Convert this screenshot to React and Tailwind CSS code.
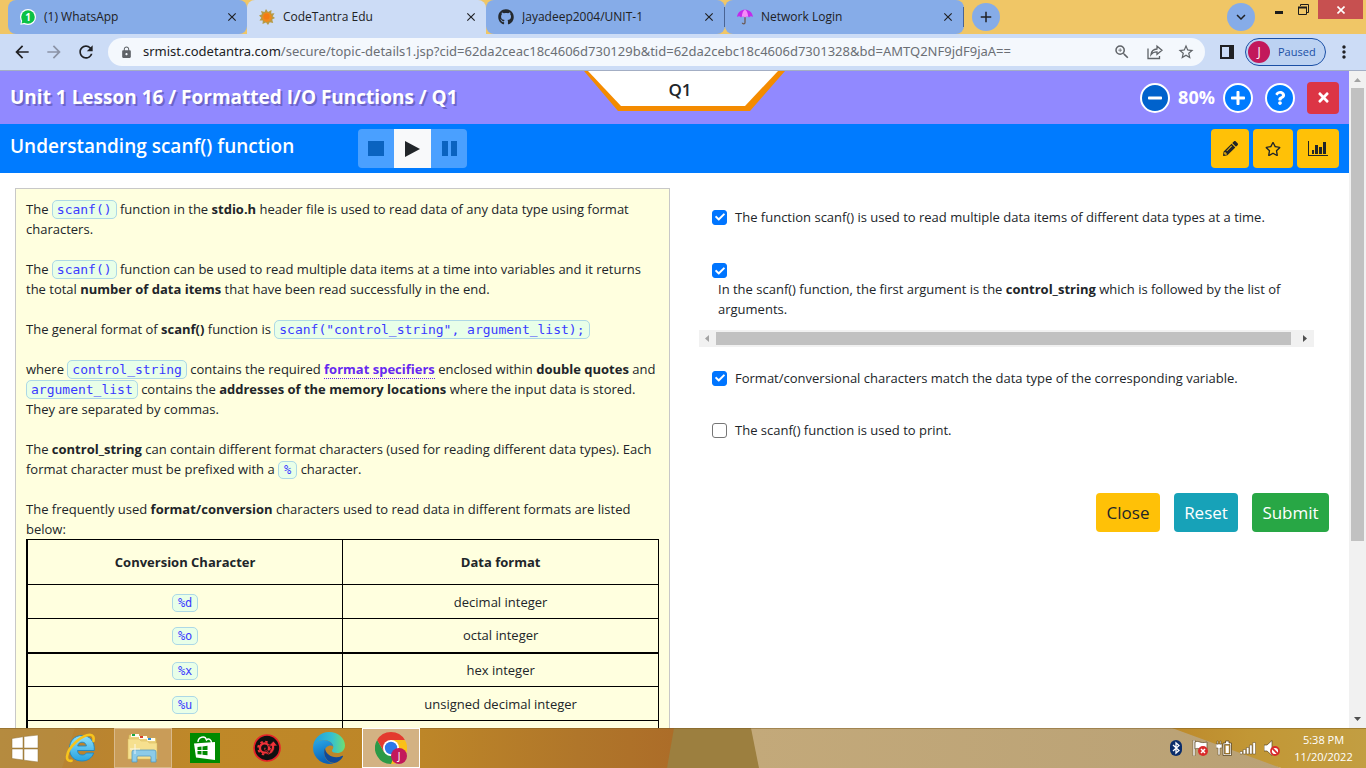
import React from "react";
import {
  MdArrowBack,
  MdArrowForward,
  MdRefresh,
  MdLock,
  MdStarBorder,
  MdZoomIn,
  MdClose,
  MdAdd,
  MdKeyboardArrowDown,
  MdMoreVert,
} from "react-icons/md";
import {
  FaGithub,
  FaMinus,
  FaPlus,
  FaQuestion,
  FaTimes,
  FaPencilAlt,
  FaRegStar,
  FaCheck,
} from "react-icons/fa";

/* ---------- Browser icons ---------- */

function WhatsAppIcon() {
  return (
    <svg viewBox="0 0 16 16" className="h-4 w-4 shrink-0">
      <circle cx="8" cy="8" r="8" fill="#fff" />
      <path d="M0.3 15.8 1.4 11l4 4z" fill="#fff" />
      <circle cx="8" cy="8" r="6.8" fill="#0bc144" />
      <path d="M1.6 14.5 2.5 10.5l3 3z" fill="#0bc144" />
      <text x="8" y="11.8" textAnchor="middle" fontFamily="Open Sans" fontWeight="700" fontSize="10" fill="#fff">
        1
      </text>
    </svg>
  );
}

function SunIcon() {
  return (
    <svg viewBox="0 0 16 16" className="h-4 w-4 shrink-0">
      <path
        d="M7 0l2 3 3.5-2-.3 3.400 3.300-.2-1.800 3L16 9l-2.800 1.500 1 3.500-3.400-.8L9 16l-2-2.600L3.500 15l.3-3.400L.5 11.500l1.800-2.800L0 6.500l3-1.200L2 2l3.500 1z"
        fill="#b79a45"
      />
      <circle cx="8" cy="8.200" r="4.700" fill="#f08a1c" />
      <circle cx="7.500" cy="7.500" r="3" fill="#f47b12" />
    </svg>
  );
}

function UmbrellaIcon() {
  return (
    <svg viewBox="0 0 16 16" className="h-4 w-4 shrink-0">
      <path d="M8 7v6.500c0 1.800-2.600 1.800-2.600.2" fill="none" stroke="#6b5a55" strokeWidth="1.300" />
      <path d="M0 8C.8 3.200 4 .8 8 .8S15.200 3.200 16 8c-1.400-1-3-.9-4 .4-1.200-1.600-2.600-1.600-4 0-1.300-1.600-2.700-1.600-4 0C3 7.100 1.400 7 0 8z" fill="#c22bea" />
      <path d="M4.800 8C5 4 6.400 1.500 8 .8c1.600.7 3 3.200 3.200 7.200-1-.8-2.200-.6-3.200.4-1-1-2.200-1.200-3.200-.4z" fill="#f58bf7" />
    </svg>
  );
}

function ShareIcon() {
  return (
    <svg viewBox="0 0 16 16" className="h-4 w-4" fill="none" stroke="#5f6368" strokeWidth="1.300">
      <path d="M1 4.500v10h11.500V12" />
      <path d="M4 10.500c.5-3.600 2.600-5.300 6-5.500V2.200L15 6.300l-5 4V7.800c-2.600 0-4.500.7-6 2.700z" />
    </svg>
  );
}

function Tab({ icon, title, active, divider }) {
  return (
    <div
      className={
        "flex w-[239px] items-center pl-3 pr-2 " +
        (active ? "rounded-t-lg bg-[#ccdcf6]" : "rounded-lg bg-[#86ace8]")
      }
    >
      {icon}
      <span className="ml-2 flex-1 truncate text-[12px] text-[#202124]">{title}</span>
      <button aria-label={"Close " + title} className="text-[#202124]">
        <MdClose size={14} />
      </button>
      {divider && <span className="-mr-2 ml-2 h-5 w-px bg-[#4a6494]" />}
    </div>
  );
}

function BrowserChrome() {
  return (
    <div className="shrink-0">
      <div className="flex h-[34px] bg-[#f0c666]">
        <div className="flex pl-2">
          <Tab icon={<WhatsAppIcon />} title="(1) WhatsApp" />
          <Tab icon={<SunIcon />} title="CodeTantra Edu" active />
          <Tab icon={<FaGithub size={16} className="shrink-0 text-[#24292f]" />} title="Jayadeep2004/UNIT-1" divider />
          <Tab icon={<UmbrellaIcon />} title="Network Login" divider />
        </div>
        <button aria-label="New tab" className="ml-2 mt-[3px] grid h-7 w-7 place-items-center rounded-full bg-[#86ace8] text-[#202124]">
          <MdAdd size={18} />
        </button>
        <div className="flex-1" />
        <button aria-label="Search tabs" className="mt-[3px] grid h-7 w-7 place-items-center rounded-full bg-[#86ace8] text-[#202124]">
          <MdKeyboardArrowDown size={18} />
        </button>
        <button aria-label="Minimize" className="ml-3 grid h-6 w-6 place-items-center">
          <span className="h-[3px] w-2 bg-[#1c1c1c]" />
        </button>
        <button aria-label="Restore" className="grid h-[18px] w-6 place-items-center">
          <svg viewBox="0 0 11 11" className="h-[11px] w-[11px]" fill="none" stroke="#1c1c1c">
            <path d="M2.500 2V.5h8v8H9" />
            <path d="M.5 3v7.500h8V3" />
            <path d="M0 3.500h9" strokeWidth="2" />
          </svg>
        </button>
        <button aria-label="Close window" className="ml-[3px] mr-[3px] grid h-[19px] w-[45px] place-items-center bg-[#c75050] text-white">
          <svg viewBox="0 0 8 8" className="h-2 w-2" stroke="#fff" strokeWidth="1.600">
            <path d="M.5.5l7 7M7.500.5l-7 7" />
          </svg>
        </button>
      </div>

      <div className="flex h-[37px] items-center border-b border-[#a3aec4] bg-[#ccdcf6] pl-3 pr-3">
        <button aria-label="Back" className="text-[#202124]">
          <MdArrowBack size={20} />
        </button>
        <button aria-label="Forward" className="ml-3 text-[#8b93a6]">
          <MdArrowForward size={20} />
        </button>
        <button aria-label="Reload" className="ml-3 text-[#202124]">
          <MdRefresh size={20} />
        </button>
        <div className="ml-3 flex h-7 flex-1 items-center rounded-full bg-[#f4f8fd] pl-3 pr-2.5">
          <MdLock size={13} className="shrink-0 text-[#5f6368]" />
          <p className="ml-2.5 flex-1 whitespace-nowrap font-['Noto_Sans',sans-serif] text-[13px] text-[#6b6f75]">
            <span className="text-[#202124]">srmist.codetantra.com</span>
            /secure/topic-details1.jsp?cid=62da2ceac18c4606d730129b&amp;tid=62da2cebc18c4606d7301328&amp;bd=AMTQ2NF9jdF9jaA==
          </p>
          <button aria-label="Zoom" className="text-[#5f6368]">
            <MdZoomIn size={18} />
          </button>
          <button aria-label="Share" className="ml-4">
            <ShareIcon />
          </button>
          <button aria-label="Bookmark" className="ml-3.5 text-[#5f6368]">
            <MdStarBorder size={18} />
          </button>
        </div>
        <button aria-label="Side panel" className="ml-[15px] h-3.5 w-3.5 border-2 border-r-[5px] border-[#202124]" />
        <button className="ml-[11px] flex h-7 w-[81px] items-center rounded-full border border-[#1a4fa5] bg-[#bcd2f2] pl-0.5 text-[11px] text-[#1a4fa5]">
          <span className="grid h-[22px] w-[22px] place-items-center rounded-full bg-[#c2185b] text-[12px] text-white">J</span>
          <span className="ml-2">Paused</span>
        </button>
        <button aria-label="Menu" className="ml-2 text-[#202124]">
          <MdMoreVert size={20} />
        </button>
      </div>
    </div>
  );
}

/* ---------- Lesson page ---------- */

function LessonHeader() {
  const round =
    "grid h-[30px] w-[30px] place-items-center rounded-full border-2 border-white text-white";
  return (
    <header className="relative flex h-[53px] items-center bg-[#9189ff] px-2.5">
      <h1 className="flex-1 text-[19px] font-bold text-white [text-shadow:2px_2px_0_#6c65c8]">
        Unit 1 Lesson 16 / Formatted I/O Functions / Q1
      </h1>
      <div className="absolute left-[calc(50%-91px)] top-0 grid h-10 w-[201px]">
        <svg viewBox="0 0 201 40" className="col-start-1 row-start-1 h-10 w-[201px]">
          <path d="M0 0h201l-35 40H34z" fill="#f48b00" />
          <path d="M4 0h190l-33 35H37z" fill="#fff" />
        </svg>
        <span className="col-start-1 row-start-1 self-center justify-self-center pb-0.5 pr-2 text-[17px] font-semibold text-[#212529]">
          Q1
        </span>
      </div>
      <div className="flex items-center text-white">
        <button aria-label="Zoom out" className={round + " bg-[#0062cc]"}>
          <FaMinus size={16} />
        </button>
        <span className="w-[53px] text-center text-[18px] font-bold">80%</span>
        <button aria-label="Zoom in" className={round + " bg-[#007bff]"}>
          <FaPlus size={16} />
        </button>
        <button aria-label="Help" className={round + " ml-3 bg-[#007bff]"}>
          <FaQuestion size={14} />
        </button>
        <button aria-label="Close lesson" className="ml-3 grid h-8 w-8 place-items-center rounded bg-[#dc3545]">
          <FaTimes size={15} />
        </button>
      </div>
    </header>
  );
}

function TopicBar() {
  const tool = "grid h-[39px] place-items-center rounded bg-[#ffc107] text-[#212529] ";
  return (
    <div className="flex h-[49px] items-center bg-[#007bff] px-2.5">
      <h2 className="w-[348px] pb-1 text-[19px] font-semibold text-white">Understanding scanf() function</h2>
      <div className="flex h-[39px] overflow-hidden rounded">
        <button aria-label="Stop" className="grid w-9 place-items-center bg-[#4aa0ff]">
          <span className="h-[15px] w-4 bg-[#0a63c0]" />
        </button>
        <button aria-label="Play" className="grid w-[37px] place-items-center bg-[#f8f9fa]">
          <svg viewBox="0 0 15 16" className="h-4 w-[15px]">
            <path d="M0 0l15 8L0 16z" fill="#212529" />
          </svg>
        </button>
        <button aria-label="Pause" className="flex w-9 items-center justify-center gap-[3px] bg-[#4aa0ff]">
          <span className="h-[15px] w-1.5 bg-[#0a63c0]" />
          <span className="h-[15px] w-1.5 bg-[#0a63c0]" />
        </button>
      </div>
      <div className="flex-1" />
      <div className="flex gap-1">
        <button aria-label="Edit" className={tool + "w-[38px]"}>
          <FaPencilAlt size={15} />
        </button>
        <button aria-label="Favourite" className={tool + "w-10"}>
          <FaRegStar size={16} />
        </button>
        <button aria-label="Statistics" className={tool + "w-[42px]"}>
          <svg viewBox="0 0 20 15" className="h-[15px] w-5" fill="#212529">
            <path d="M0 0h1v14h19v1H0z" />
            <path d="M4 9h2v4H4zM7 4h3v9H7zM11 6h3v7h-3zM15 1h3v12h-3z" />
          </svg>
        </button>
      </div>
    </div>
  );
}

function Code({ children, small }) {
  return (
    <code
      className={
        "rounded-[5px] border border-[#add8e6] bg-[#e8ffe8] py-px font-['DejaVu_Sans_Mono','Liberation_Mono',monospace] leading-none text-[#3a3aff] " +
        (small ? "px-[5px] text-[12px]" : "px-1 text-[13px]")
      }
    >
      {children}
    </code>
  );
}

const formats = [
  ["%d", "decimal integer"],
  ["%o", "octal integer"],
  ["%x", "hex integer"],
  ["%u", "unsigned decimal integer"],
  ["", ""],
];

function Explanation() {
  return (
    <article className="mr-0.5 border border-[#c8c8c8] bg-[#ffffdf] px-2.5 pt-2.5 text-[13px] leading-5 text-[#212529]">
      <p className="mb-5">
        The <Code>scanf()</Code> function in the <b>stdio.h</b> header file is used to read data of any data type using
        format characters.
      </p>
      <p className="mb-5">
        The <Code>scanf()</Code> function can be used to read multiple data items at a time into variables and it
        returns the total <b>number of data items</b> that have been read successfully in the end.
      </p>
      <p className="mb-5">
        The general format of <b>scanf()</b> function is <Code>scanf("control_string", argument_list);</Code>
      </p>
      <p className="mb-5">
        where <Code>control_string</Code> contains the required{" "}
        <a href="#format" className="border-b border-dotted border-[#6528f0] font-bold text-[#6528f0]">
          format specifiers
        </a>{" "}
        enclosed within <b>double quotes</b> and <Code>argument_list</Code> contains the{" "}
        <b>addresses of the memory locations</b> where the input data is stored. They are separated by commas.
      </p>
      <p className="mb-5">
        The <b>control_string</b> can contain different format characters (used for reading different data types). Each
        format character must be prefixed with a <Code small>%</Code> character.
      </p>
      <p>
        The frequently used <b>format/conversion</b> characters used to read data in different formats are listed
        below:
      </p>
      <table className="w-full table-fixed border-collapse border border-l-2 border-black text-center">
        <thead>
          <tr className="h-[45px]">
            <th className="border border-black">Conversion Character</th>
            <th className="border border-black">Data format</th>
          </tr>
        </thead>
        <tbody>
          {formats.map(([code, name]) => (
            <tr key={code} className={code === "%x" ? "h-[34px] border-t-2 border-black" : "h-[34px]"}>
              <td className="border-x border-b border-black">{code && <Code small>{code}</Code>}</td>
              <td className="border-x border-b border-black">{name}</td>
            </tr>
          ))}
        </tbody>
      </table>
    </article>
  );
}

function Tick({ id, defaultChecked }) {
  return (
    <span className="grid h-[15px] w-[15px] shrink-0 place-items-center">
      <input
        id={id}
        type="checkbox"
        defaultChecked={defaultChecked}
        className="peer col-start-1 row-start-1 h-[15px] w-[15px] appearance-none rounded-[3px] border border-[#767676] bg-white checked:border-[#0075ff] checked:bg-[#0075ff]"
      />
      <FaCheck size={10} className="pointer-events-none col-start-1 row-start-1 hidden text-white peer-checked:block" />
    </span>
  );
}

function Option({ id, checked, children }) {
  return (
    <div className="flex items-center gap-2 pl-[13px]">
      <Tick id={id} defaultChecked={checked} />
      <label htmlFor={id}>{children}</label>
    </div>
  );
}

function Answers() {
  return (
    <form className="flex flex-col pt-[19px] text-[13px] leading-5 text-[#212529]">
      <div className="pr-[15px]">
        <Option id="a" checked>
          The function scanf() is used to read multiple data items of different data types at a time.
        </Option>
        <div className="mt-9 pl-[13px]">
          <Tick id="b" defaultChecked />
          <label htmlFor="b" className="mt-px block pl-1.5 pr-5">
            In the scanf() function, the first argument is the <b>control_string</b> which is followed by the list of
            arguments.
          </label>
        </div>
        <div className="mb-[21px] mt-[11px] flex h-[17px] items-center bg-[#f1f1f1]">
          <svg viewBox="0 0 17 17" className="h-[17px] w-[17px]">
            <path d="M10 5v7L6 8.500z" fill="#a3a3a3" />
          </svg>
          <div className="h-[13px] flex-1 bg-[#c1c1c1]" />
          <svg viewBox="0 0 17 17" className="mr-px ml-[5px] h-[17px] w-[17px]">
            <path d="M7 5v7l4-3.500z" fill="#505050" />
          </svg>
        </div>
        <Option id="c" checked>
          Format/conversional characters match the data type of the corresponding variable.
        </Option>
        <div className="mt-8">
          <Option id="d">The scanf() function is used to print.</Option>
        </div>
      </div>
      <div className="mt-[53px] flex justify-end gap-3.5 text-[17px] text-white">
        <button type="button" className="h-[39px] w-16 rounded bg-[#ffc107] text-[#212529]">
          Close
        </button>
        <button type="button" className="h-[39px] w-16 rounded bg-[#17a2b8]">
          Reset
        </button>
        <button type="button" className="h-[39px] w-[77px] rounded bg-[#28a745]">
          Submit
        </button>
      </div>
    </form>
  );
}

function PageScrollbar() {
  return (
    <div className="flex w-[17px] shrink-0 flex-col items-center bg-[#f1f1f1]">
      <svg viewBox="0 0 17 17" className="h-[17px] w-[17px]">
        <path d="M5 11h7L8.500 7z" fill="#a3a3a3" />
      </svg>
      <div className="min-h-0 w-[13px] flex-[453] bg-[#c1c1c1]" />
      <div className="min-h-0 flex-[170]" />
      <svg viewBox="0 0 17 17" className="h-[17px] w-[17px]">
        <path d="M5 6h7L8.500 10z" fill="#505050" />
      </svg>
    </div>
  );
}

/* ---------- Windows taskbar ---------- */

function Wallpaper() {
  return (
    <svg viewBox="0 0 1366 40" preserveAspectRatio="none" className="absolute inset-0 h-full w-full">
      <defs>
        <linearGradient id="wood">
          <stop offset="0" stopColor="#b38739" />
          <stop offset="0.1" stopColor="#b88332" />
          <stop offset="0.3" stopColor="#bf8828" />
          <stop offset="0.62" stopColor="#bd8628" />
          <stop offset="0.85" stopColor="#b0762a" />
          <stop offset="1" stopColor="#ac6c28" />
        </linearGradient>
        <linearGradient id="sand" x1="0" y1="0" x2="1" y2="0">
          <stop offset="0" stopColor="#c3a97a" />
          <stop offset="1" stopColor="#b9a175" />
        </linearGradient>
        <linearGradient id="gold" x1="0" y1="0" x2="1" y2="0">
          <stop offset="0" stopColor="#bd8a2c" />
          <stop offset="0.4" stopColor="#c29735" />
          <stop offset="1" stopColor="#c29e42" />
        </linearGradient>
      </defs>
      <path d="M0 0h680v40H0z" fill="url(#wood)" />
      <path d="M0 0h75L62 40H0z" fill="#b58d45" opacity="0.6" />
      <path d="M674 0h82l4 40h-93z" fill="#9c7f3f" />
      <path d="M751 0h450l80 40H759z" fill="url(#sand)" />
      <path d="M1172 0h194v40h-85z" fill="url(#gold)" />
      <path d="M0 .5h1366" stroke="#7d5c22" strokeOpacity="0.45" />
    </svg>
  );
}

function StartIcon() {
  return (
    <svg viewBox="0 0 28 27" className="h-[27px] w-7" fill="#fff" stroke="#8f7038" strokeWidth="0.500">
      <path d="M1 3.500l11-1.700V13H1zM13 1.600L27 0v13H13zM1 14h11v11L1 23.500zM13 14h14v13l-14-1.800z" />
    </svg>
  );
}

function ExplorerIEIcon() {
  return (
    <svg viewBox="0 0 32 32" className="h-8 w-8">
      <defs>
        <linearGradient id="ieBlue" x1="0" y1="0" x2="0" y2="1">
          <stop offset="0" stopColor="#8fe0fb" />
          <stop offset="1" stopColor="#27a3e0" />
        </linearGradient>
      </defs>
      <path
        d="M17 3.500C9.500 3.500 4.500 9 4.500 16.500 4.500 24.500 9.500 29 17 29c5.500 0 10-3 11.700-8h-7.400c-.9 1.400-2.200 2-4.100 2-2.900 0-4.500-1.600-4.700-4.500h16.800C29.900 9.500 25 3.500 17 3.500zM12.700 14c.5-2.400 2-3.800 4.400-3.800s4 1.400 4.300 3.800z"
        fill="url(#ieBlue)"
        stroke="#1d87c4"
        strokeWidth="0.900"
      />
      <path d="M28.500 9c.8-3.400-.3-6.200-3.600-6.200C18 2.800 3 14 2 24.500c-.3 3 1 4.800 4.600 4.300" fill="none" stroke="#f7c41c" strokeWidth="2.600" strokeLinecap="round" />
    </svg>
  );
}

function FilesIcon() {
  return (
    <svg viewBox="0 0 32 30" className="h-[30px] w-8">
      <path d="M2 2l9-1 1 2 8 0 1 2h8l1 21H1z" fill="#ecd27c" stroke="#cfae4e" strokeWidth="0.600" />
      <path d="M4 1h8v3H4zM12 3h8v3h-8zM20 5h8v3h-8z" fill="#fffdf0" />
      <path d="M5 1h3v2H5z" fill="#18a848" />
      <path d="M13 3h3v2h-3z" fill="#d8402a" />
      <path d="M21 5h3v2h-3z" fill="#2b8fe0" />
      <path d="M1 6h11l2 2h7l1 2h8v16H1z" fill="#f6e08f" stroke="#d8b95a" strokeWidth="0.500" />
      <path d="M5 29V19q0-2 2-2h20q2 0 2 2v10h-5v-5q0-1-1-1H11q-1 0-1 1v5z" fill="#8ccbe8" stroke="#5799bf" strokeWidth="0.800" />
      <path d="M8 11v10M3 16h10" stroke="#fff" strokeWidth="1" opacity="0.8" />
    </svg>
  );
}

function StoreIcon() {
  return (
    <svg viewBox="0 0 30 30" className="h-[30px] w-[30px]">
      <path d="M0 0h30v30H0z" fill="#008a00" />
      <path d="M8 9c0-5 7-7 8.500-2 2-2 5-.5 5 3" fill="none" stroke="#fff" strokeWidth="1.400" />
      <path d="M4 10.500l21-1.500v18L6 24.500z" fill="#fff" />
      <path d="M7.500 14l4-.5V17h-4zM12.500 13.400l5-.6V17h-5zM7.500 18h4v3.600l-4-.4zM12.500 18h5v4.300l-5-.6z" fill="#008a00" />
    </svg>
  );
}

function DriverIcon() {
  return (
    <svg viewBox="0 0 30 30" className="h-[30px] w-[30px]">
      <circle cx="15" cy="15" r="13" fill="#111" stroke="#e8232a" strokeWidth="1.700" />
      <circle cx="12.500" cy="15" r="4.600" fill="none" stroke="#f03238" strokeWidth="2.400" />
      <circle cx="12.500" cy="15" r="6.400" fill="none" stroke="#f03238" strokeWidth="1.800" strokeDasharray="2.500 2.520" />
      <path d="M14 14.500h-2v2.500l3.500 2c3-1 4.500-3 4-6h-3L21.500 8l4 5h-3c.5 5-3 8.500-7.500 9l3-3.500-5-2" fill="#f03238" stroke="#111" strokeWidth="0.700" />
    </svg>
  );
}

function EdgeIcon() {
  return (
    <svg viewBox="0 0 32 32" className="h-8 w-8">
      <defs>
        <linearGradient id="edgeTop" x1="0" y1="0.500" x2="1" y2="0.500">
          <stop offset="0" stopColor="#1d9de0" />
          <stop offset="0.600" stopColor="#35c1cf" />
          <stop offset="1" stopColor="#6ee072" />
        </linearGradient>
        <linearGradient id="edgeLeft" x1="0" y1="0" x2="0.300" y2="1">
          <stop offset="0" stopColor="#2aa8e6" />
          <stop offset="1" stopColor="#0a62b8" />
        </linearGradient>
      </defs>
      <path d="M0 16C0 7 7 0 16 0s16 6 16 13.500c0 5-4 7.500-7.500 7.500-3 0-5.500-1-5.500-2.300 0-1 1.300-1.400 1.300-3.700C20.300 11 16 8 11 8 5 8 1 11.500 0 16z" fill="url(#edgeTop)" />
      <path d="M0 16C.5 11 5 8 10.500 8c5.500 0 9.500 3 9.800 7-1.500-3-9-1.500-9 6 0 5 4 10.500 10 10A16 16 0 010 16z" fill="url(#edgeLeft)" />
      <path d="M12 16c-2.500 6 1 15 9.500 15 3.500-.8 6.500-3 8.500-6.500.3-.8-.3-1-1-.6C21 27.500 12.500 23 12 16z" fill="#114a98" />
    </svg>
  );
}

function ChromeIcon() {
  return (
    <svg viewBox="0 0 32 32" className="h-8 w-8">
      <path d="M16 16L29.860 8A16 16 0 0116 32z" fill="#fbc116" />
      <path d="M16 8h13.860L16 16z" fill="#fbc116" />
      <path d="M16 32A16 16 0 012.140 8L9 20l7 4 4-2z" fill="#2b9a47" />
      <path d="M16 8h13.860A16 16 0 0016 0A16 16 0 002.140 8l7 12z" fill="#e33b2e" />
      <circle cx="16" cy="16" r="8" fill="#fff" />
      <circle cx="16" cy="16" r="6.200" fill="#2b78e8" />
      <circle cx="24" cy="24" r="8" fill="#c2185b" />
      <text x="24" y="27.500" textAnchor="middle" fontFamily="Open Sans" fontSize="10" fill="#fff">
        J
      </text>
    </svg>
  );
}

function TrayIcons() {
  return (
    <div className="flex items-center gap-2">
      <svg viewBox="0 0 16 16" className="h-4 w-4">
        <rect x="2" width="12" height="16" rx="6" fill="#0b2d6b" />
        <path d="M5 5l6 5.500L8 13V3l3 2.500L5 11" fill="none" stroke="#fff" strokeWidth="1.300" />
      </svg>
      <svg viewBox="0 0 16 16" className="h-4 w-4">
        <path d="M1 0h2v16H1z" fill="#fff" stroke="#5a4520" strokeWidth="0.500" />
        <path d="M3 2c4-2 5 2 12 0v7c-6 2-8-2-12 0z" fill="#fff" stroke="#5a4520" strokeWidth="0.700" />
        <circle cx="11" cy="11" r="5" fill="#d92b2b" />
        <path d="M9 9l4 4M13 9l-4 4" stroke="#fff" strokeWidth="1.500" />
      </svg>
      <svg viewBox="0 0 16 16" className="h-4 w-4">
        <path d="M0 4h6v4H4v7H2V8H0zM1 1h1v3H1zM4 1h1v3H4z" fill="#fff" stroke="#5a4520" strokeWidth="0.500" />
        <path d="M7 3h2.500V1h3.500v2h2.500v12.500H7z" fill="#fff" stroke="#5a4520" strokeWidth="0.800" />
        <path d="M8.500 4.500h5.500v9.500H8.500z" fill="#b98b33" stroke="#5a4520" strokeWidth="0.600" />
        <path d="M9.700 5.700h3.100v7.300H9.700z" fill="#fff" />
      </svg>
      <svg viewBox="0 0 16 16" className="h-4 w-4" fill="#fff" stroke="#5a4520" strokeWidth="0.500">
        <path d="M0 11.500h2.500V14H0zM3.200 9.500h2.500V14H3.200zM6.400 7.500h2.500V14H6.400zM9.600 5h2.500v9H9.600zM12.800 2.500h2.700V14h-2.700z" />
      </svg>
      <svg viewBox="0 0 16 16" className="h-4 w-4">
        <path d="M0 5h3l5-4.500v15L3 11H0z" fill="#fff" stroke="#5a4520" strokeWidth="0.700" />
        <circle cx="11" cy="11" r="4" fill="#fff" stroke="#d92b2b" strokeWidth="1.800" />
        <path d="M8.200 8.200l5.600 5.600" stroke="#d92b2b" strokeWidth="1.800" />
      </svg>
    </div>
  );
}

function Taskbar() {
  const slot = "grid h-10 w-[58px] place-items-center ";
  return (
    <footer className="relative h-10 shrink-0">
      <Wallpaper />
      <div className="relative flex h-10 items-center">
        <button aria-label="Start" className="grid h-10 w-[52px] place-items-center pr-0.5">
          <StartIcon />
        </button>
        <div className="flex gap-1">
          <button aria-label="Internet Explorer" className={slot}>
            <ExplorerIEIcon />
          </button>
          <button aria-label="File Explorer" className={slot + "border border-[#d9b98a] bg-[#c99c58]"}>
            <FilesIcon />
          </button>
          <button aria-label="Store" className={slot}>
            <StoreIcon />
          </button>
          <button aria-label="Driver Booster" className={slot}>
            <DriverIcon />
          </button>
          <button aria-label="Microsoft Edge" className={slot}>
            <EdgeIcon />
          </button>
          <button aria-label="Google Chrome" className={slot + "border border-white bg-[#d3b283]"}>
            <ChromeIcon />
          </button>
        </div>
        <div className="flex-1" />
        <TrayIcons />
        <div className="ml-1.5 mr-[5px] w-[75px] text-center text-[11px] leading-[17px] text-white">
          <p>5:38 PM</p>
          <p>11/20/2022</p>
        </div>
      </div>
    </footer>
  );
}

export default function App() {
  return (
    <div className="flex h-screen flex-col overflow-hidden bg-white font-['Open_Sans','Noto_Sans',sans-serif]">
      <BrowserChrome />
      <div className="flex min-h-0 flex-1">
        <main className="min-w-0 flex-1 overflow-hidden">
          <LessonHeader />
          <TopicBar />
          <div className="grid grid-cols-2 pl-[15px] pr-5 pt-[15px]">
            <Explanation />
            <div className="pl-[27px]">
              <Answers />
            </div>
          </div>
        </main>
        <PageScrollbar />
      </div>
      <Taskbar />
    </div>
  );
}
